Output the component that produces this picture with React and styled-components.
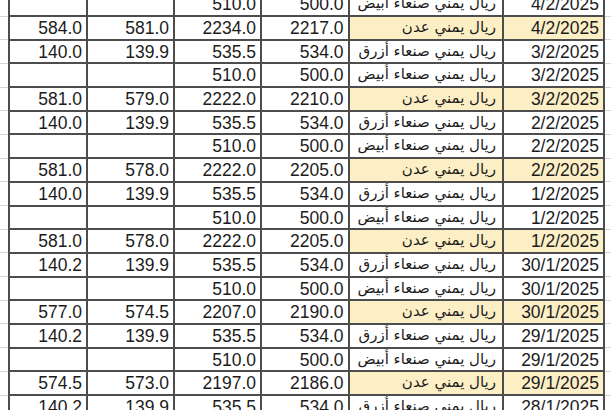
import React from 'react';
import styled, { createGlobalStyle } from 'styled-components';

const GlobalStyle = createGlobalStyle`
  html, body {
    margin: 0;
    padding: 0;
    background: #ffffff;
    overflow: hidden;
  }
  body {
    font-family: "Liberation Sans", "DejaVu Sans", Arial, sans-serif;
  }
  * { box-sizing: border-box; }
`;

const BLUE = 'ريال يمني صنعاء أزرق';
const WHITE = 'ريال يمني صنعاء أبيض';
const ADEN = 'ريال يمني عدن';

const rows = [
  ['4/2/2025', 'ريال يمني صنعاء ابيض', '500.0', '510.0', '', ''],
  ['4/2/2025', ADEN, '2217.0', '2234.0', '581.0', '584.0'],
  ['3/2/2025', BLUE, '534.0', '535.5', '139.9', '140.0'],
  ['3/2/2025', WHITE, '500.0', '510.0', '', ''],
  ['3/2/2025', ADEN, '2210.0', '2222.0', '579.0', '581.0'],
  ['2/2/2025', BLUE, '534.0', '535.5', '139.9', '140.0'],
  ['2/2/2025', WHITE, '500.0', '510.0', '', ''],
  ['2/2/2025', ADEN, '2205.0', '2222.0', '578.0', '581.0'],
  ['1/2/2025', BLUE, '534.0', '535.5', '139.9', '140.0'],
  ['1/2/2025', WHITE, '500.0', '510.0', '', ''],
  ['1/2/2025', ADEN, '2205.0', '2222.0', '578.0', '581.0'],
  ['30/1/2025', BLUE, '534.0', '535.5', '139.9', '140.2'],
  ['30/1/2025', WHITE, '500.0', '510.0', '', ''],
  ['30/1/2025', ADEN, '2190.0', '2207.0', '574.5', '577.0'],
  ['29/1/2025', BLUE, '534.0', '535.5', '139.9', '140.2'],
  ['29/1/2025', WHITE, '500.0', '510.0', '', ''],
  ['29/1/2025', ADEN, '2186.0', '2197.0', '573.0', '574.5'],
  ['28/1/2025', BLUE, '534.0', '535.5', '139.9', '140.2'],
];

export default function App() {
  return (
    <>
      <GlobalStyle />
      <Sheet>
        {rows.map((r, i) => {
          const [date, name, buy, sell, buy2, sell2] = r;
          const hl = name === ADEN;
          return (
            <Row key={i}>
              <Edge />
              <Num $first>{sell2}</Num>
              <Num>{buy2}</Num>
              <Num>{sell}</Num>
              <Num>{buy}</Num>
              <Name dir="rtl" $hl={hl}>{name}</Name>
              <Num $hl={hl}>{date}</Num>
              <Edge />
            </Row>
          );
        })}
      </Sheet>
    </>
  );
}

const Sheet = styled.div`
  display: grid;
  grid-auto-rows: 23.7px;
  margin-top: -6.7px;
  color: #1c1c1c;
`;

const Row = styled.div`
  display: grid;
  grid-template-columns: 8px 80px 87px 87px 87.5px 154.5px 101px 1fr;
`;

const Cell = styled.div`
  padding-right: 4px;
  border-right: 2px solid #4d4d4d;
  border-bottom: 2px solid #4d4d4d;
  border-left: ${(p) => (p.$first ? '2px solid #4d4d4d' : 'none')};
  background: ${(p) => (p.$hl ? '#fcefc6' : '#ffffff')};
  text-align: right;
  white-space: nowrap;
  overflow: hidden;
`;

const Num = styled(Cell)`
  font-size: 17.5px;
  line-height: 22.7px;
`;

const Name = styled(Cell)`
  padding-right: 6px;
  text-align: start;
  font-family: "DejaVu Sans", sans-serif;
  font-size: 15px;
  line-height: 21.7px;
`;

const Edge = styled.div`
  border-bottom: 1px solid #d6d6d6;
  margin-bottom: 0.5px;
`;
